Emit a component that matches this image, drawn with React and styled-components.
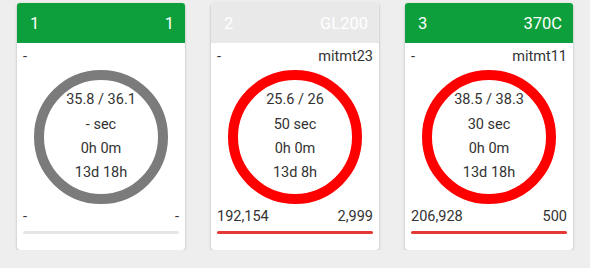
import React from "react";
import styled, { createGlobalStyle } from "styled-components";

const Global = createGlobalStyle`
  html, body { margin: 0; padding: 0; background: #eeeeee; }
  body { font-family: Roboto, "Liberation Sans", sans-serif; }
`;

const Board = styled.div`
  display: flex;
  gap: 26px;
  padding: 3px 0 0 17px;
`;

const Card = styled.div`
  width: 168px;
  background: #ffffff;
  border-radius: 3px;
  box-shadow: 0 1px 3px rgba(0, 0, 0, 0.18), 0 1px 2px rgba(0, 0, 0, 0.1);
  overflow: hidden;
  padding-bottom: 16px;
`;

const Header = styled.div`
  height: 40px;
  display: flex;
  align-items: center;
  justify-content: space-between;
  padding: 0 11px 0 13px;
  background: ${(p) => (p.$active ? "#0c9f3b" : "#e9e9e9")};
  color: #ffffff;
  font-size: 16.5px;
`;

const Row = styled.div`
  display: flex;
  justify-content: space-between;
  padding: 0 6px;
  margin-top: ${(p) => p.$mt}px;
  font-size: 14.5px;
  line-height: 16px;
  color: #333333;
`;

const Ring = styled.div`
  width: 114px;
  height: 114px;
  margin: 5px auto 0;
  border-radius: 50%;
  border: 10px solid ${(p) => p.$color};
  display: flex;
  flex-direction: column;
  align-items: center;
  justify-content: center;
  font-size: 14.5px;
  line-height: 24.3px;
  color: #333333;
`;

const Bar = styled.div`
  height: 3px;
  margin: 6px 6px 0;
  border-radius: 2px;
  background: ${(p) => p.$color};
`;

const cards = [
  {
    id: "1",
    name: "1",
    active: true,
    left: "-",
    right: "",
    ring: "#7b7b7b",
    lines: ["35.8 / 36.1", "- sec", "0h 0m", "13d 18h"],
    bl: "-",
    br: "-",
    bar: "#e6e6e6",
  },
  {
    id: "2",
    name: "GL200",
    active: false,
    left: "-",
    right: "mitmt23",
    ring: "#fe0000",
    lines: ["25.6 / 26", "50 sec", "0h 0m", "13d 8h"],
    bl: "192,154",
    br: "2,999",
    bar: "#e53935",
  },
  {
    id: "3",
    name: "370C",
    active: true,
    left: "-",
    right: "mitmt11",
    ring: "#fe0000",
    lines: ["38.5 / 38.3", "30 sec", "0h 0m", "13d 18h"],
    bl: "206,928",
    br: "500",
    bar: "#e53935",
  },
];

export default function App() {
  return (
    <>
      <Global />
      <Board>
        {cards.map((c) => (
          <Card key={c.id}>
            <Header $active={c.active}>
              <span>{c.id}</span>
              <span>{c.name}</span>
            </Header>
            <Row $mt={6}>
              <span>{c.left}</span>
              <span>{c.right}</span>
            </Row>
            <Ring $color={c.ring}>
              {c.lines.map((l, i) => (
                <div key={i}>{l}</div>
              ))}
            </Ring>
            <Row $mt={5}>
              <span>{c.bl}</span>
              <span>{c.br}</span>
            </Row>
            <Bar $color={c.bar} />
          </Card>
        ))}
      </Board>
    </>
  );
}
